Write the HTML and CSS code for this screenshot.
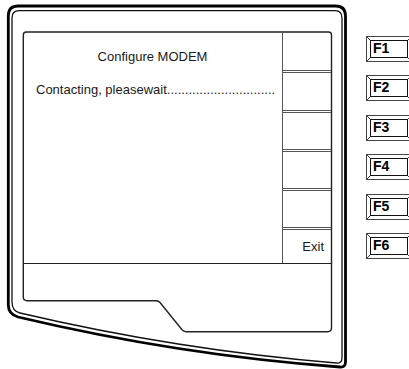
FILE: index.html
```html
<!DOCTYPE html>
<html lang="en">
<head>
    <meta charset="UTF-8">
    <meta name="viewport" content="width=device-width, initial-scale=1.0">
    <title>Configure MODEM</title>
    <link rel="stylesheet" href="styles.css">
</head>
<body>
    <div class="stage">
        <div class="device">
            <!-- bezel outline and lower panel are drawn, the screen is laid out on top -->
            <svg class="bezel" width="350" height="369" viewBox="0 0 350 369">
                <path class="outer" d="M8.3 16 Q8.3 6 18.3 6 L335.5 6 Q345.5 6 345.5 16 L345.5 362 Q345.5 367.5 340 367 Q178 355 18 317 Q8.3 314 8.3 305 Z"/>
                <path class="inner" d="M12 18 Q12 10.7 19 10.7 L335 10.7 Q342 10.7 342 18 L342 358 Q342 363.5 336.5 363 Q178 350 20 313 Q12 311 12 302 Z"/>
                <path class="panel" d="M23.3 35 Q23.3 32 26.3 32 L328.5 32 Q331.5 32 331.5 35 L331.5 328 Q331.5 331.7 327.5 331.7 L186 331.7 Q183.5 331.7 182 329.7 L160 302.5 Q158.5 300.7 156 300.7 L27 300.7 Q23.3 300.7 23.3 297 Z"/>
            </svg>
            <div class="screen">
                <div class="display">
                    <div class="title">Configure MODEM</div>
                    <div class="status">Contacting, pleasewait..............................</div>
                </div>
                <div class="softkeys">
                    <div class="softkey"></div>
                    <div class="softkey"></div>
                    <div class="softkey"></div>
                    <div class="softkey"></div>
                    <div class="softkey"></div>
                    <div class="softkey exit">Exit</div>
                </div>
            </div>
        </div>

        <div class="fkeys">
            <div class="fkey"><svg class="bevel" width="46" height="26"><path d="M0 0 L4 4 M0 26 L4 22 M46 0 L42 4 M46 26 L42 22"/></svg><span class="cap">F1</span></div>
            <div class="fkey"><svg class="bevel" width="46" height="26"><path d="M0 0 L4 4 M0 26 L4 22 M46 0 L42 4 M46 26 L42 22"/></svg><span class="cap">F2</span></div>
            <div class="fkey"><svg class="bevel" width="46" height="26"><path d="M0 0 L4 4 M0 26 L4 22 M46 0 L42 4 M46 26 L42 22"/></svg><span class="cap">F3</span></div>
            <div class="fkey"><svg class="bevel" width="46" height="26"><path d="M0 0 L4 4 M0 26 L4 22 M46 0 L42 4 M46 26 L42 22"/></svg><span class="cap">F4</span></div>
            <div class="fkey"><svg class="bevel" width="46" height="26"><path d="M0 0 L4 4 M0 26 L4 22 M46 0 L42 4 M46 26 L42 22"/></svg><span class="cap">F5</span></div>
            <div class="fkey"><svg class="bevel" width="46" height="26"><path d="M0 0 L4 4 M0 26 L4 22 M46 0 L42 4 M46 26 L42 22"/></svg><span class="cap">F6</span></div>
        </div>
    </div>
</body>
</html>
```

FILE: styles.css
```css
html, body {
    margin: 0;
    padding: 0;
}
body {
    width: 409px;
    height: 369px;
    overflow: hidden;
    background-color: #fff;
    font-family: "Liberation Sans", Arial, sans-serif;
    color: #1a1a1a;
}
.stage {
    display: flex;
    align-items: flex-start;
}
.device {
    position: relative;
    flex: none;
    width: 350px;
    height: 369px;
    box-sizing: border-box;
    padding: 32px 0 0 23px;
}
.bezel {
    position: absolute;
    left: 0;
    top: 0;
    fill: none;
}
.bezel .outer {
    stroke: #000;
    stroke-width: 2.8;
}
.bezel .inner {
    stroke: #111;
    stroke-width: 1.3;
}
.bezel .panel {
    stroke: #222;
    stroke-width: 1.4;
}
.screen {
    position: relative;
    display: flex;
    width: 308px;
    height: 232px;
    box-sizing: border-box;
    border-bottom: 1px solid #222;
}
.display {
    flex: 1;
    padding-top: 17px;
    font-size: 13px;
    line-height: 15px;
}
.title {
    text-align: center;
}
.status {
    margin-top: 18px;
    padding-left: 13px;
    white-space: nowrap;
}
.softkeys {
    flex: none;
    width: 49px;
    box-sizing: border-box;
    border-left: 1px solid #555;
    padding-top: 2px;
    display: flex;
    flex-direction: column;
}
.softkey {
    height: 39.3px;
    box-sizing: border-box;
    border-bottom: 3px double #555;
}
.softkey.exit {
    flex: 1;
    height: auto;
    border-bottom: none;
    display: flex;
    align-items: center;
    justify-content: flex-end;
    padding-right: 7px;
    font-size: 13px;
}
.fkeys {
    flex: none;
    margin-left: 16px;
    padding-top: 36px;
    display: flex;
    flex-direction: column;
    gap: 13.4px;
}
.fkey {
    position: relative;
    width: 46px;
    height: 26px;
    box-sizing: border-box;
    border: 1px solid #444;
    padding: 3px;
}
.bevel {
    position: absolute;
    left: -1px;
    top: -1px;
    stroke: #444;
    stroke-width: 1;
}
.cap {
    position: relative;
    display: block;
    height: 100%;
    box-sizing: border-box;
    border: 1.5px solid #111;
    padding-left: 2px;
    font-size: 14px;
    font-weight: bold;
    line-height: 15px;
    color: #000;
}
```
